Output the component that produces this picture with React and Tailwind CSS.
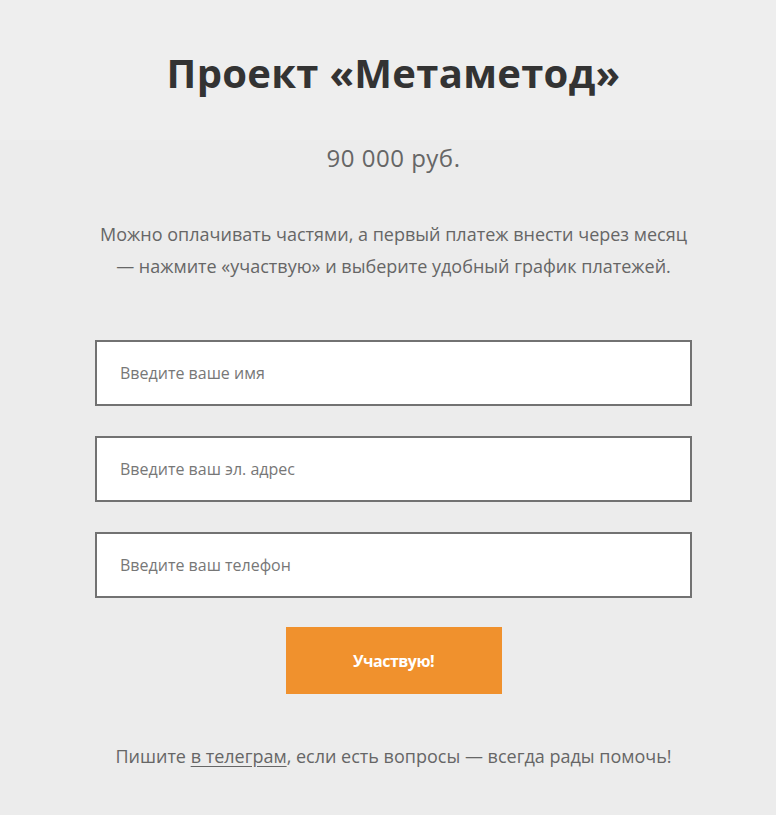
export default function App() {
  const font = { fontFamily: '"Open Sans", "Noto Sans", sans-serif' };
  return (
    <div className="min-h-[815px] bg-[#ececec] text-[#666] pl-[11px]" style={font}>
      <div className="bg-[#eeeeee] pt-[43px] h-[140px] -ml-[11px] pl-[11px]">
        <h1 className="text-center text-[40px] leading-[60px] font-bold text-[#333] tracking-[0.3px]">
          Проект «Метаметод»
        </h1>
      </div>
      <div className="flex flex-col items-center">
        <div className="text-[24px] leading-[36px] text-[#666] tracking-[0.5px]">90 000 руб.</div>
        <p className="mt-[42px] w-[600px] text-center text-[18px] leading-[32px] text-[#666]">
          Можно оплачивать частями, а первый платеж внести через месяц — нажмите «участвую» и выберите удобный график платежей.
        </p>
        <div className="mt-[58px] w-[597px] flex flex-col gap-[30px]">
          {["Введите ваше имя", "Введите ваш эл. адрес", "Введите ваш телефон"].map((p) => (
            <div key={p} className="h-[66px] bg-white border-2 border-[#727272] flex items-center px-[23px] text-[16px] text-[#777]">
              {p}
            </div>
          ))}
        </div>
        <button className="mt-[29px] w-[216px] h-[67px] bg-[#f0912d] text-white font-bold text-[16px] tracking-[-0.5px]">
          Участвую!
        </button>
        <p className="mt-[46px] text-[18px] leading-[32px] text-[#666]">
          Пишите <span className="underline underline-offset-[3px]">в телеграм</span>, если есть вопросы — всегда рады помочь!
        </p>
      </div>
    </div>
  );
}
